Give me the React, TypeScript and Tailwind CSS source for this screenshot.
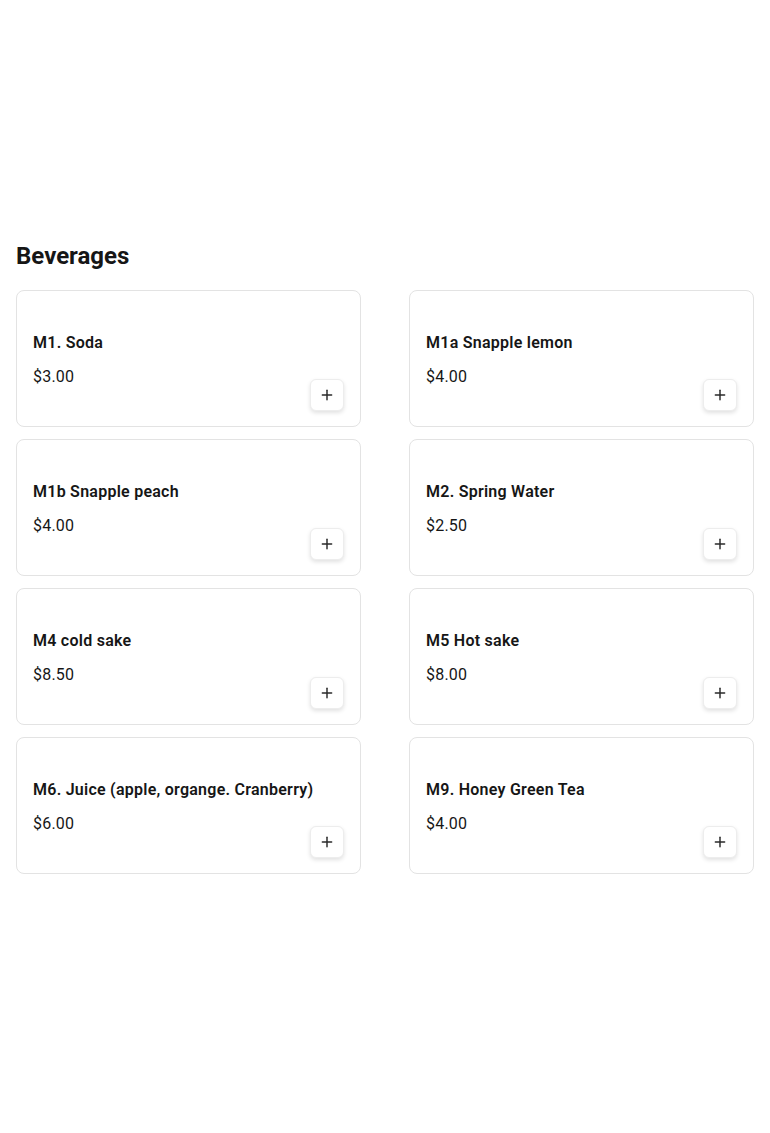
import { Plus } from "lucide-react";

const items = [
  { name: "M1. Soda", price: "$3.00" },
  { name: "M1a Snapple lemon", price: "$4.00" },
  { name: "M1b Snapple peach", price: "$4.00" },
  { name: "M2. Spring Water", price: "$2.50" },
  { name: "M4 cold sake", price: "$8.50" },
  { name: "M5 Hot sake", price: "$8.00" },
  { name: "M6. Juice (apple, organge. Cranberry)", price: "$6.00" },
  { name: "M9. Honey Green Tea", price: "$4.00" },
];

function ItemCard({ name, price }: { name: string; price: string }) {
  return (
    <div className="h-[137px] flex rounded-lg border border-[#e3e3e3] bg-white p-4">
      <div className="flex-1 min-w-0 flex flex-col justify-center pt-[2px]">
        <div className="whitespace-nowrap text-base leading-6 font-semibold tracking-[0.25px] text-[#161616]">{name}</div>
        <div className="mt-2.5 text-base leading-6 tracking-[0.2px] text-[#161616]">{price}</div>
      </div>
      <button className="self-end shrink-0 -mb-px w-[34px] h-[32px] flex items-center justify-center rounded-md border border-[#ededed] bg-white shadow-[0_2px_4px_rgba(0,0,0,0.12)] text-[#2a2a2a]">
        <Plus size={16} strokeWidth={2.2} />
      </button>
    </div>
  );
}

export default function App() {
  return (
    <div className="min-h-screen bg-white font-['Roboto',sans-serif] pt-[240px] px-4">
      <h2 className="text-2xl leading-8 font-bold text-[#161616]">Beverages</h2>
      <div className="mt-[18px] grid grid-cols-2 gap-x-12 gap-y-3">
        {items.map((it) => (
          <ItemCard key={it.name} name={it.name} price={it.price} />
        ))}
      </div>
    </div>
  );
}
